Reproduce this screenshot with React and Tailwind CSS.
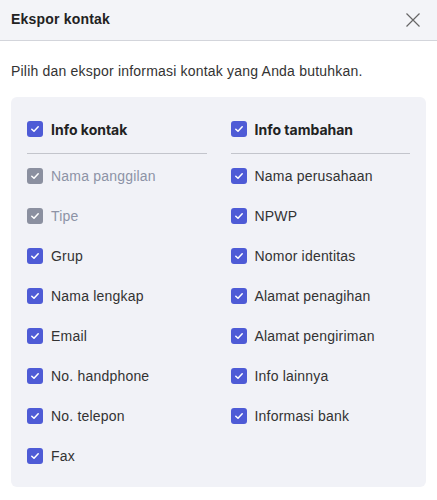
import React, { useState } from "react";

const leftItems = [
  { label: "Nama panggilan", disabled: true },
  { label: "Tipe", disabled: true },
  { label: "Grup" },
  { label: "Nama lengkap" },
  { label: "Email" },
  { label: "No. handphone" },
  { label: "No. telepon" },
  { label: "Fax" },
];

const rightItems = [
  { label: "Nama perusahaan" },
  { label: "NPWP" },
  { label: "Nomor identitas" },
  { label: "Alamat penagihan" },
  { label: "Alamat pengiriman" },
  { label: "Info lainnya" },
  { label: "Informasi bank" },
];

const Box = ({ checked, disabled }) => (
  <span
    className={`flex h-4 w-4 shrink-0 items-center justify-center rounded-[3px] ${
      disabled ? "bg-[#8b90a0]" : "bg-[#4e5bd6]"
    }`}
  >
    {checked && (
      <svg width="10" height="10" viewBox="0 0 10 10" fill="none">
        <path
          d="M1.8 5.2 L4 7.3 L8.2 2.8"
          stroke="white"
          strokeWidth="1.5"
          strokeLinecap="round"
          strokeLinejoin="round"
        />
      </svg>
    )}
  </span>
);

const Column = ({ title, items }) => {
  const [checked, setChecked] = useState(items.map(() => true));

  return (
    <div className="flex flex-col">
      <label className="flex h-8 cursor-pointer items-center gap-2">
        <Box checked />
        <span className="font-['Inter',sans-serif] text-[14px] font-bold text-[#222]">
          {title}
        </span>
      </label>
      <div className="mt-2 h-px bg-[#c3c5cc]" />
      <div className="flex flex-col pt-[2px]">
        {items.map((item, i) => (
          <label
            key={item.label}
            onClick={() => {
              if (item.disabled) return;
              setChecked(checked.map((c, j) => (j === i ? !c : c)));
            }}
            className="flex h-10 cursor-pointer items-center gap-2"
          >
            <Box checked={checked[i]} disabled={item.disabled} />
            <span
              className={`text-[14px] tracking-[0.2px] ${
                item.disabled ? "text-[#8d93a6]" : "text-[#333]"
              }`}
            >
              {item.label}
            </span>
          </label>
        ))}
      </div>
    </div>
  );
};

const App = () => {
  return (
    <div className="h-[500px] w-[437px] bg-white font-['Liberation_Sans',Arial,sans-serif]">
      {/* Header */}
      <div className="flex h-[41px] items-center justify-between border-b border-[#d3d5db] bg-[#f3f4f8] pl-[11px] pr-[14px]">
        <h1 className="pb-[2px] text-[14px] font-bold tracking-[0.2px] text-[#222]">
          Ekspor kontak
        </h1>
        <button className="flex h-5 w-5 items-center justify-center text-[#666]">
          <svg width="14" height="14" viewBox="0 0 14 14" fill="none">
            <path d="M0.5 0.5 L13.5 13.5 M13.5 0.5 L0.5 13.5" stroke="currentColor" strokeWidth="1.2" />
          </svg>
        </button>
      </div>

      {/* Body */}
      <div className="px-[11px]">
        <p className="pt-[20px] text-[14px] leading-5 tracking-[0.2px] text-[#333]">
          Pilih dan ekspor informasi kontak yang Anda butuhkan.
        </p>

        <div className="mt-[16px] grid grid-cols-2 gap-6 rounded-md bg-[#f1f2f7] px-4 pb-[11px] pt-4">
          <Column title="Info kontak" items={leftItems} />
          <Column title="Info tambahan" items={rightItems} />
        </div>
      </div>
    </div>
  );
};

export default App;
